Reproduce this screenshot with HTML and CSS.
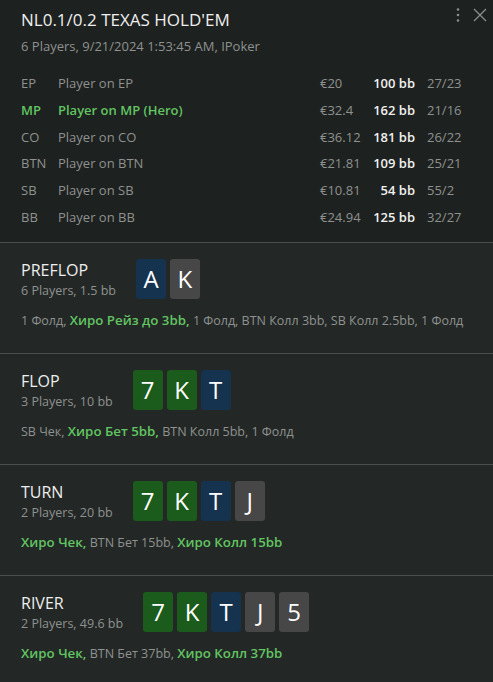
FILE: index.html
```html
<!DOCTYPE html>
<html>
<head>
<meta charset="utf-8">
<link rel="stylesheet" href="styles.css">
</head>
<body>
<div class="panel">
  <header class="head">
    <div class="title-row">
      <div class="title">NL0.1/0.2 TEXAS HOLD'EM</div>
      <div class="tools">
        <svg class="dots" width="6" height="16" viewBox="0 0 6 16"><circle cx="3" cy="2.5" r="1.3"/><circle cx="3" cy="8" r="1.3"/><circle cx="3" cy="13.5" r="1.3"/></svg>
        <svg class="close" width="14" height="14" viewBox="0 0 14 14"><path d="M1 1 L13 13 M13 1 L1 13"/></svg>
      </div>
    </div>
    <div class="sub">6 Players, 9/21/2024 1:53:45 AM, IPoker</div>
    <div class="players">
      <div class="prow"><span class="pos">EP</span><span class="name">Player on EP</span><span class="money">€20</span><span class="bb">100 bb</span><span class="stat">27/23</span></div>
      <div class="prow hero"><span class="pos">MP</span><span class="name">Player on MP (Hero)</span><span class="money">€32.4</span><span class="bb">162 bb</span><span class="stat">21/16</span></div>
      <div class="prow"><span class="pos">CO</span><span class="name">Player on CO</span><span class="money">€36.12</span><span class="bb">181 bb</span><span class="stat">26/22</span></div>
      <div class="prow"><span class="pos">BTN</span><span class="name">Player on BTN</span><span class="money">€21.81</span><span class="bb">109 bb</span><span class="stat">25/21</span></div>
      <div class="prow"><span class="pos">SB</span><span class="name">Player on SB</span><span class="money">€10.81</span><span class="bb">54 bb</span><span class="stat">55/2</span></div>
      <div class="prow"><span class="pos">BB</span><span class="name">Player on BB</span><span class="money">€24.94</span><span class="bb">125 bb</span><span class="stat">32/27</span></div>
    </div>
  </header>

  <section class="street">
    <div class="street-top">
      <div class="label"><div class="st-name">PREFLOP</div><div class="st-info">6 Players, 1.5 bb</div></div>
      <div class="cards"><span class="card blue">A</span><span class="card gray">K</span></div>
    </div>
    <div class="actions">1 Фолд, <b>Хиро Рейз до 3bb,</b> 1 Фолд, BTN Колл 3bb, SB Колл 2.5bb, 1 Фолд</div>
  </section>

  <section class="street">
    <div class="street-top">
      <div class="label"><div class="st-name">FLOP</div><div class="st-info">3 Players, 10 bb</div></div>
      <div class="cards"><span class="card green">7</span><span class="card green">K</span><span class="card blue">T</span></div>
    </div>
    <div class="actions">SB Чек, <b>Хиро Бет 5bb,</b> BTN Колл 5bb, 1 Фолд</div>
  </section>

  <section class="street">
    <div class="street-top">
      <div class="label"><div class="st-name">TURN</div><div class="st-info">2 Players, 20 bb</div></div>
      <div class="cards"><span class="card green">7</span><span class="card green">K</span><span class="card blue">T</span><span class="card gray">J</span></div>
    </div>
    <div class="actions"><b>Хиро Чек,</b> BTN Бет 15bb, <b>Хиро Колл 15bb</b></div>
  </section>

  <section class="street">
    <div class="street-top">
      <div class="label"><div class="st-name">RIVER</div><div class="st-info">2 Players, 49.6 bb</div></div>
      <div class="cards"><span class="card green">7</span><span class="card green">K</span><span class="card blue">T</span><span class="card gray">J</span><span class="card gray">5</span></div>
    </div>
    <div class="actions"><b>Хиро Чек,</b> BTN Бет 37bb, <b>Хиро Колл 37bb</b></div>
  </section>
</div>
</body>
</html>
```

FILE: styles.css
```css
html, body {
  margin: 0;
  padding: 0;
  background: #232826;
}
body {
  font-family: "Open Sans", "Liberation Sans", sans-serif;
  color: #e6e6e6;
}
.panel {
  width: 493px;
  height: 682px;
  overflow: hidden;
  background: #232826;
}
.head {
  background: #1d211f;
  padding: 7px 21px 12px 21px;
  border-bottom: 1px solid #4a4e4c;
}
.title-row {
  display: flex;
  justify-content: space-between;
  align-items: flex-start;
}
.title {
  font-size: 17px;
  line-height: 26px;
  color: #eeeeee;
}
.tools {
  display: flex;
  align-items: center;
  gap: 12px;
  margin-right: -15px;
  margin-top: 0;
}
.dots circle { fill: #8c8e8d; }
.close path { stroke: #8c8e8d; stroke-width: 1.3; fill: none; }
.sub {
  font-size: 13px;
  line-height: 18px;
  color: #8f9190;
  margin-top: 4px;
}
.players {
  margin-top: 15px;
  font-size: 13px;
}
.prow {
  display: flex;
  align-items: center;
  height: 26.67px;
  color: #8f9190;
}
.pos { width: 37px; }
.name { width: 262px; }
.money { width: 48px; }
.bb { width: 47px; text-align: right; color: #f0f0f0; font-weight: 600; }
.stat { margin-left: 12px; }
.prow.hero .pos, .prow.hero .name { color: #62c462; font-weight: 600; }

.street {
  padding: 16px 21px 23px 21px;
  border-bottom: 1px solid #4a4e4c;
}
.street-top {
  display: flex;
  align-items: flex-start;
  gap: 20px;
}
.st-name {
  font-size: 16px;
  line-height: 23px;
  color: #eeeeee;
}
.st-info {
  font-size: 12.5px;
  line-height: 17px;
  color: #8f9190;
}
.cards {
  display: flex;
  gap: 4px;
}
.card {
  width: 30px;
  height: 40px;
  border-radius: 3px;
  display: flex;
  align-items: center;
  justify-content: center;
  font-size: 24px;
  color: #ffffff;
}
.card.blue { background: #15324f; }
.card.green { background: #1b5b1b; }
.card.gray { background: #474747; }
.actions {
  margin-top: 13px;
  height: 18px;
  font-size: 12.5px;
  line-height: 18px;
  color: #8f9190;
  white-space: nowrap;
}
.actions b { color: #62c462; font-weight: 600; font-size: 13.3px; line-height: 1; }
```
